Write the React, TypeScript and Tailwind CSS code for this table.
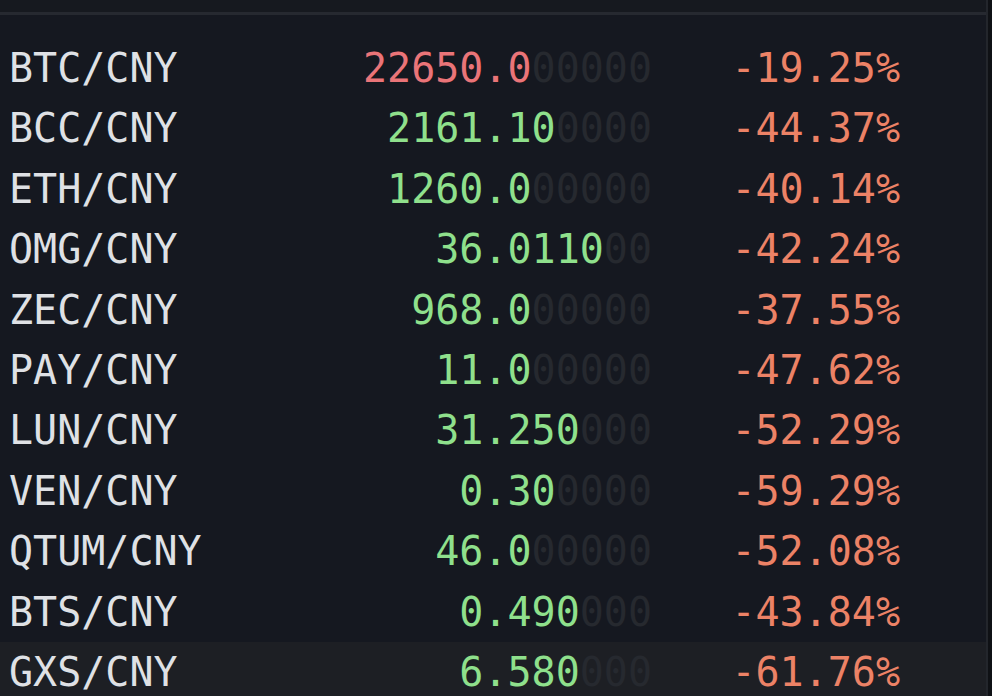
import React from 'react';

interface Ticker {
  pair: string;
  price: string;
  pad: string;
  change: string;
  up: boolean;
}

const tickers: Ticker[] = [
  { pair: 'BTC/CNY', price: '22650.0', pad: '00000', change: '-19.25%', up: false },
  { pair: 'BCC/CNY', price: '2161.10', pad: '0000', change: '-44.37%', up: true },
  { pair: 'ETH/CNY', price: '1260.0', pad: '00000', change: '-40.14%', up: true },
  { pair: 'OMG/CNY', price: '36.0110', pad: '00', change: '-42.24%', up: true },
  { pair: 'ZEC/CNY', price: '968.0', pad: '00000', change: '-37.55%', up: true },
  { pair: 'PAY/CNY', price: '11.0', pad: '00000', change: '-47.62%', up: true },
  { pair: 'LUN/CNY', price: '31.250', pad: '000', change: '-52.29%', up: true },
  { pair: 'VEN/CNY', price: '0.30', pad: '0000', change: '-59.29%', up: true },
  { pair: 'QTUM/CNY', price: '46.0', pad: '00000', change: '-52.08%', up: true },
  { pair: 'BTS/CNY', price: '0.490', pad: '000', change: '-43.84%', up: true },
  { pair: 'GXS/CNY', price: '6.580', pad: '000', change: '-61.76%', up: true },
];

export default function App() {
  return (
    <div className="w-[992px] h-[696px] overflow-hidden bg-[#151820] flex font-['DejaVu_Sans_Mono',monospace]">
      <div className="flex-1 flex flex-col">
        {/* Header strip */}
        <div className="h-[12px] shrink-0 bg-[#16191f]" />
        <div className="h-[3px] shrink-0 bg-[#262930]" />

        {/* Ticker list */}
        <div className="pt-[23px] shrink-0 flex flex-col">
          {tickers.map((t, i) => (
            <div
              key={t.pair}
              className={`h-[60.4px] shrink-0 leading-[60.4px] text-[40px] flex items-center ${
                i === tickers.length - 1 ? 'bg-[#1d1f24]' : ''
              }`}
            >
              <span className="w-[300px] pl-[9px] text-[#dfe1e5] whitespace-pre">{t.pair}</span>
              <span className="w-[352px] text-right whitespace-pre">
                <span className={t.up ? 'text-[#8fe08c]' : 'text-[#ea7478]'}>{t.price}</span>
                <span className="text-[#26292f]">{t.pad}</span>
              </span>
              <span className="w-[248px] text-right text-[#ec8266] whitespace-pre">{t.change}</span>
            </div>
          ))}
        </div>
      </div>

      {/* Scroll edge */}
      <div className="w-[2px] bg-[#23262c]" />
      <div className="w-[4px] bg-[#0f1115]" />
    </div>
  );
}
